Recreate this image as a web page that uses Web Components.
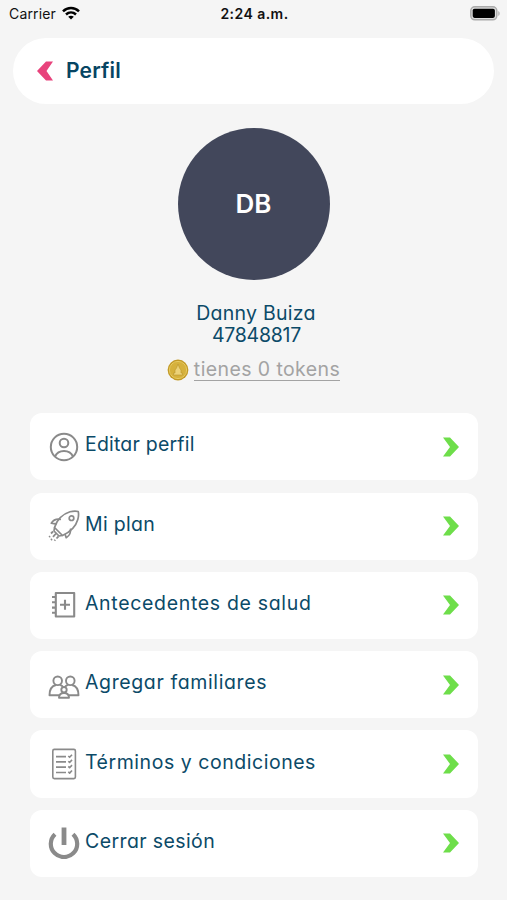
<!DOCTYPE html>
<html lang="es">
<head>
<meta charset="utf-8">
<title>Perfil</title>
<style>
  html, body {
    margin: 0;
    height: 900px;
    overflow: hidden;
    background: #f5f5f5;
    font-family: Inter, "Liberation Sans", sans-serif;
  }
</style>
</head>
<body>
<profile-screen></profile-screen>

<script>
const icons = {
  user: `<g stroke-width="2"><circle cx="16" cy="16" r="13.200"/><circle cx="16" cy="12" r="4.300"/><path d="M7 25.500C8.800 21.500 12.300 20 16 20s7.200 1.500 9 5.500"/></g>`,
  rocket: `<g stroke-width="1.700"><path d="M6.500 17.500C9 10 15 4 22 1.800c3-.8 6-.9 8.200-.3.600 2.300.4 5.200-.4 8C28 16 22 22 14.500 25.500z"/><circle cx="23.500" cy="8.200" r="2.300"/><path d="M13 9.500c-4-.8-7.500.2-9.700 3.700l5.200.9M22.500 18.500c.6 4-.8 7-4.300 9.200l-1.200-3.800M6.500 17.500l-.5 3.500 5 5 3.500-.5"/></g><path stroke-width="1.800" d="M5 21.500l-2 2M8 23.500l-3 3.300M10.500 26.300l-2 2.200M2 26.200l-.8.900M4 29l-1 1M7.300 29.800l-.9.900"/>`,
  record: `<g stroke-width="2.100"><path d="M7.800 4h18.400v23.500H7.800z"/><path d="M4 8h4M4 13.300h4M4 18.600h4M4 23.700h4M17 10.700v10M12 15.700h10"/></g>`,
  family: `<g stroke-width="1.900" transform="translate(0 1.800)"><circle cx="9.700" cy="10" r="4.300"/><circle cx="22.300" cy="10" r="4.300"/><path d="M11 24.500H1.500c0-5.500 2.200-9.300 6.500-10.300M12.200 14c1.500.6 2.600 1.600 3.300 2.800M21 24.500h9.500c0-5.500-2.200-9.300-6.500-10.300M19.800 14c-1.500.6-2.600 1.600-3.300 2.800"/><circle cx="16" cy="19" r="2.700"/><path d="M11 27c0-3 2-4.800 5-4.800s5 1.800 5 4.800z"/></g>`,
  terms: `<rect x="4.800" y="1.400" width="22.600" height="29.200" rx="1.500" stroke-width="1.600"/><path stroke-width="1.700" d="M8 8.700h10M8 13.900h10M8 19.100h10M8 24.500h10"/><path stroke-width="1.600" d="M20.300 8l1.300 1.300L24 6.700M20.300 13.200l1.300 1.300 2.400-2.600M20.300 18.400l1.300 1.300 2.400-2.600M20.300 23.800l1.300 1.300 2.400-2.600"/>`,
  power: `<path stroke-width="4.200" d="M7 7.200a13.200 13.200 0 1 0 18 0"/><path stroke-width="4.800" d="M16 .5v17.500"/>`
};

class BaseElement extends HTMLElement {
  constructor() {
    super();
    this.attachShadow({ mode: 'open' });
  }

  connectedCallback() {
    this.shadowRoot.innerHTML = this.render();
  }
}

class StatusBar extends BaseElement {
  render() {
    return `
      <style>
        :host {
          display: grid;
          grid-template-columns: 1fr auto 1fr;
          align-items: center;
          box-sizing: border-box;
          height: 28px;
          padding: 0 7px 2px 9px;
          color: #111;
          font-size: 14px;
        }
        .carrier { display: flex; align-items: center; gap: 6px; letter-spacing: .15px; }
        .time { font-weight: 600; letter-spacing: .45px; }
        .battery { justify-self: end; }
        svg { display: block; }
      </style>
      <div class="carrier">
        <span>Carrier</span>
        <svg width="18" height="14" viewBox="0 0 18 14" fill="none" stroke="#000" stroke-width="2.500">
          <path d="M1 5.300c4.500-4.400 11.500-4.400 16 0M4 8.500c2.900-2.700 7.100-2.700 10 0"/>
          <path d="M9 13.500L6.200 10.700c1.600-1.400 4-1.400 5.600 0z" fill="#000" stroke="none"/>
        </svg>
      </div>
      <span class="time">2:24 a.m.</span>
      <svg class="battery" width="30" height="15" viewBox="0 0 30 15">
        <rect x=".8" y=".8" width="26" height="13" rx="4" fill="#ddd" stroke="#aaa" stroke-width="1.500"/>
        <rect x="2.700" y="2.700" width="22.200" height="9.200" rx="1.800"/>
        <path d="M28.300 5v5c1.800-.8 1.800-4.200 0-5z" fill="#aaa"/>
      </svg>
    `;
  }
}

class ScreenHeader extends BaseElement {
  render() {
    return `
      <style>
        :host {
          display: flex;
          align-items: center;
          gap: 13px;
          box-sizing: border-box;
          height: 66px;
          margin: 10px 13px 0;
          padding-left: 24px;
          border-radius: 33px;
          background: #fff;
          color: #064563;
          font-size: 21px;
          font-weight: 600;
          letter-spacing: .2px;
          font-feature-settings: "cv11";
        }
        .title { padding-bottom: 2px; }
      </style>
      <svg width="16" height="20" viewBox="0 0 16 20" fill="#e8437c"><path d="M0 10L9 .5h7L9.500 10l6.500 9.500H9z"/></svg>
      <span class="title"><slot></slot></span>
    `;
  }
}

class ProfileSummary extends BaseElement {
  render() {
    return `
      <style>
        :host {
          display: flex;
          flex-direction: column;
          align-items: center;
          margin-top: 24px;
          color: #0b4a68;
          font-size: 19.500px;
          line-height: 22px;
          font-feature-settings: "cv11";
        }
        .avatar {
          display: grid;
          place-items: center;
          width: 152px;
          height: 152px;
          margin-bottom: 22px;
          border-radius: 50%;
          background: #42475b;
          color: #fff;
          font-size: 26px;
          font-weight: 600;
        }
        .name { margin-left: 5px; letter-spacing: .25px; }
        .id { margin-left: 6px; letter-spacing: -.25px; }
        .tokens {
          display: flex;
          align-items: center;
          gap: 5px;
          margin-top: 12px;
          color: #a3a3a3;
          letter-spacing: .4px;
        }
        .tokens span { border-bottom: 1px solid #a3a3a3; }
      </style>
      <div class="avatar">${this.getAttribute('initials')}</div>
      <div class="name">${this.getAttribute('name')}</div>
      <div class="id">${this.getAttribute('document')}</div>
      <div class="tokens">
        <svg width="22" height="22" viewBox="0 0 22 22">
          <circle cx="11" cy="11" r="10.400" fill="#c39a27"/>
          <circle cx="11" cy="11" r="8.600" fill="#d6b13c" stroke="#e6ca60"/>
          <path d="M11 5l1.500 4 1.500 2v3h1.500v2h-9v-2H8v-3l1.500-2z" fill="#ecd278" stroke="#b9952c" stroke-width=".6"/>
        </svg>
        <span>tienes ${this.getAttribute('tokens')} tokens</span>
      </div>
    `;
  }
}

class MenuItem extends BaseElement {
  render() {
    return `
      <style>
        :host {
          display: flex;
          align-items: center;
          box-sizing: border-box;
          height: 67.200px;
          padding: 0 19px 0 18px;
          border-radius: 12px;
          background: #fff;
          color: #0b4a68;
          font-size: 19.500px;
          letter-spacing: var(--tracking, 0);
          font-feature-settings: "cv11";
        }
        .icon {
          margin-right: 5px;
          fill: none;
          stroke: #8a8a8a;
          stroke-linejoin: round;
        }
        .label { flex: 1; padding-bottom: 5px; white-space: nowrap; }
      </style>
      <svg class="icon" width="32" height="32" viewBox="0 0 32 32">${icons[this.getAttribute('icon')]}</svg>
      <span class="label"><slot></slot></span>
      <svg width="16" height="20" viewBox="0 0 16 20" fill="#6ede4a"><path d="M0 .5h7L16 10l-9 9.500H0L7 10z"/></svg>
    `;
  }
}

class ProfileScreen extends BaseElement {
  render() {
    return `
      <style>
        :host { display: block; width: 507px; }
        nav {
          display: flex;
          flex-direction: column;
          gap: 12.100px;
          margin: 32.300px 29px 0 30px;
        }
      </style>
      <status-bar></status-bar>
      <screen-header>Perfil</screen-header>
      <profile-summary initials="DB" name="Danny Buiza" document="47848817" tokens="0"></profile-summary>
      <nav>
        <menu-item icon="user" style="--tracking: .2px">Editar perfil</menu-item>
        <menu-item icon="rocket" style="--tracking: .3px">Mi plan</menu-item>
        <menu-item icon="record" style="--tracking: .67px">Antecedentes de salud</menu-item>
        <menu-item icon="family" style="--tracking: .62px">Agregar familiares</menu-item>
        <menu-item icon="terms" style="--tracking: .54px">Términos y condiciones</menu-item>
        <menu-item icon="power" style="--tracking: .4px">Cerrar sesión</menu-item>
      </nav>
    `;
  }
}

customElements.define('status-bar', StatusBar);
customElements.define('screen-header', ScreenHeader);
customElements.define('profile-summary', ProfileSummary);
customElements.define('menu-item', MenuItem);
customElements.define('profile-screen', ProfileScreen);
</script>
</body>
</html>
